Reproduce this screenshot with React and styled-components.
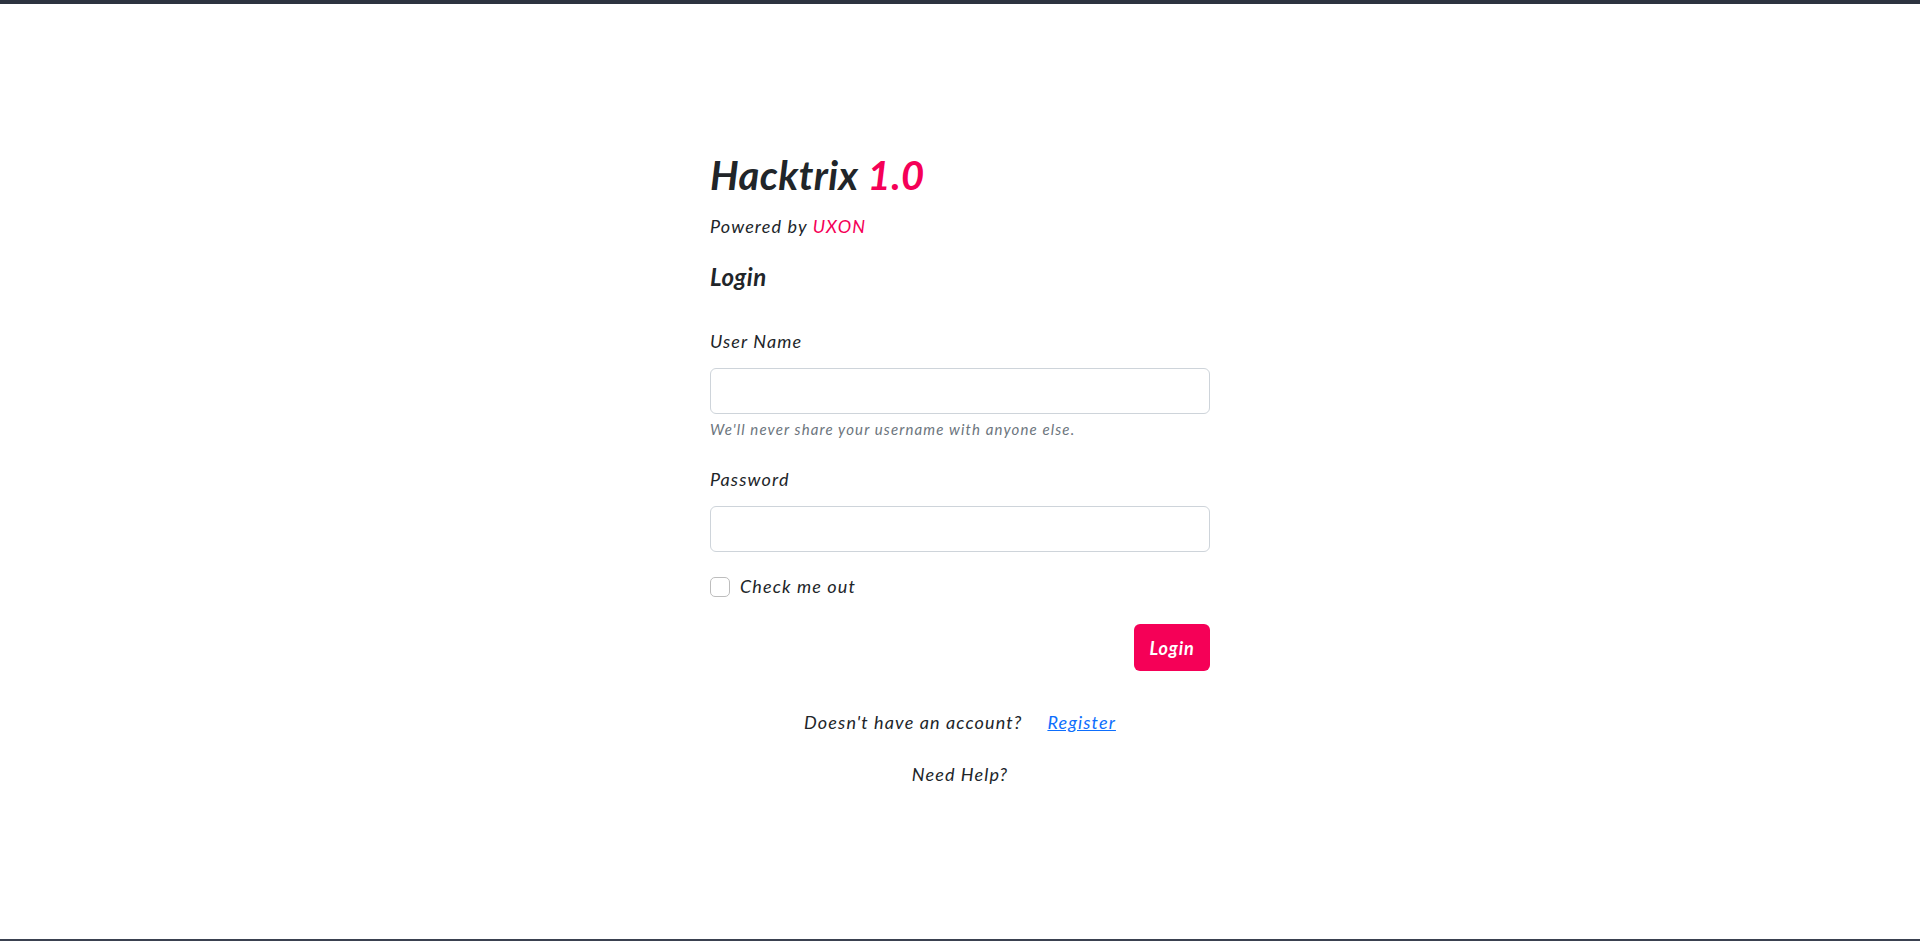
import React, { useState } from 'react'
import styled, { createGlobalStyle } from 'styled-components'

const GlobalStyle = createGlobalStyle`
  html, body {
    margin: 0;
    padding: 0;
  }
  body {
    font-family: Lato, "Open Sans", sans-serif;
    font-style: italic;
    color: #212529;
    background: #fff;
  }
  * { box-sizing: border-box; }
`;

const Page = styled.div`
  height: 941px;
  border-top: 4px solid #2d3340;
  border-bottom: 2px solid #3a4150;
  display: flex;
  justify-content: center;
`;

const Wrapper = styled.div`
  width: 500px;
  padding-top: 147px;
  display: flex;
  flex-direction: column;
  letter-spacing: 0.07em;
`;

const Title = styled.h1`
  margin: 0;
  font-size: 40px;
  line-height: 48px;
  font-weight: 700;
  letter-spacing: 0.01em;
`;

const Accent = styled.span`
  color: #f50057;
  font-weight: ${p => (p.$bold ? 700 : 400)};
`;

const Powered = styled.p`
  margin: 14px 0 0;
  font-size: 18px;
  line-height: 27px;
`;

const Heading = styled.h4`
  margin: 22px 0 0;
  font-size: 24px;
  line-height: 29px;
  font-weight: 700;
  letter-spacing: 0.02em;
`;

const Form = styled.form`
  display: flex;
  flex-direction: column;
`;

const Label = styled.label`
  margin-top: ${p => p.$top}px;
  margin-bottom: 13px;
  font-size: 18px;
  line-height: 27px;
`;

const Input = styled.input`
  height: 46px;
  width: 100%;
  padding: 6px 12px;
  border: 1px solid #ced4da;
  border-radius: 6px;
  font-size: 18px;
  font-family: inherit;
  outline: none;
`;

const Help = styled.small`
  margin-top: 4px;
  font-size: 15px;
  line-height: 22px;
  color: #6c757d;
`;

const CheckRow = styled.label`
  margin-top: 21px;
  display: flex;
  align-items: center;
  gap: 10px;
  font-size: 18px;
  line-height: 27px;
`;

const Box = styled.input`
  appearance: none;
  margin: 0;
  width: 20px;
  height: 20px;
  border: 1px solid #bdbdbd;
  border-radius: 5px;
  background: #fff;
`;

const Actions = styled.div`
  margin-top: 24px;
  display: flex;
  justify-content: flex-end;
`;

const Button = styled.button`
  width: 76px;
  height: 47px;
  border: none;
  border-radius: 6px;
  background: #f50057;
  color: #fff;
  font-family: inherit;
  font-style: italic;
  font-weight: 700;
  font-size: 18px;
  letter-spacing: 0.05em;
  cursor: pointer;
`;

const Footer = styled.div`
  margin-top: 38px;
  display: flex;
  flex-direction: column;
  align-items: center;
  gap: 25px;
  font-size: 18px;
  line-height: 27px;
`;

const Row = styled.div`
  display: flex;
  gap: 25px;
`;

const Link = styled.a`
  color: #0d6efd;
  text-decoration: underline;
`;

const App = () => {
  const [checked, setChecked] = useState(false)

  return (
    <>
      <GlobalStyle />
      <Page>
        <Wrapper>
          <Title>Hacktrix <Accent $bold>1.0</Accent></Title>
          <Powered>Powered by <Accent>UXON</Accent></Powered>
          <Heading>Login</Heading>

          <Form onSubmit={e => e.preventDefault()}>
            <Label $top={37} htmlFor="username">User Name</Label>
            <Input id="username" type="text" />
            <Help>We'll never share your username with anyone else.</Help>

            <Label $top={26} htmlFor="password">Password</Label>
            <Input id="password" type="password" />

            <CheckRow>
              <Box type="checkbox" checked={checked} onChange={() => setChecked(!checked)} />
              Check me out
            </CheckRow>

            <Actions>
              <Button type="submit">Login</Button>
            </Actions>
          </Form>

          <Footer>
            <Row>
              <span>Doesn't have an account?</span>
              <Link href="#">Register</Link>
            </Row>
            <span>Need Help?</span>
          </Footer>
        </Wrapper>
      </Page>
    </>
  )
}

export default App
